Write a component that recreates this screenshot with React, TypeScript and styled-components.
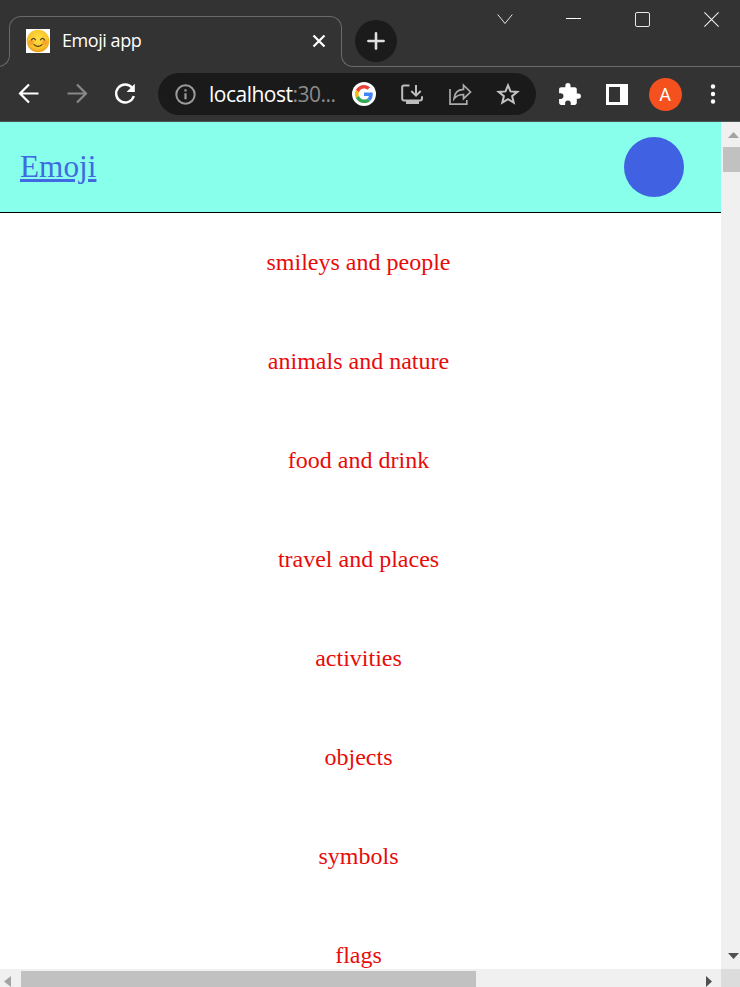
import React from "react";
import styled, { createGlobalStyle } from "styled-components";

const Global = createGlobalStyle`
  *, *::before, *::after { box-sizing: border-box; }
  html, body { margin: 0; padding: 0; overflow: hidden; }
`;

const Window = styled.div`
  width: 740px;
  height: 987px;
  display: flex;
  flex-direction: column;
  overflow: hidden;
  background: #fff;
  font-family: "Open Sans", "Noto Sans", sans-serif;
`;

const TabStrip = styled.div`
  position: relative;
  display: flex;
  height: 67px;
  flex: none;
  padding-left: 9px;
  background: #333;
  color: #fff;
  &::before {
    content: "";
    position: absolute;
    left: -6px;
    bottom: 0;
    width: 16px;
    height: 13px;
    border: solid #6a6a6a;
    border-width: 0 1px 1px 0;
    border-radius: 0 0 12px 0;
  }
  &::after {
    content: "";
    position: absolute;
    left: 341px;
    right: -5px;
    bottom: 0;
    height: 13px;
    border: solid #6a6a6a;
    border-width: 0 0 1px 1px;
    border-radius: 0 0 0 12px;
  }
`;

const Tab = styled.div`
  display: flex;
  align-items: center;
  width: 333px;
  height: 38px;
  margin-top: 16px;
  padding: 12px 15px 0 16px;
  border: solid #6a6a6a;
  border-width: 1px 1px 0 1px;
  border-radius: 12px 12px 0 0;
`;

const Favicon = styled.div`
  width: 24px;
  height: 24px;
  margin-top: -1px;
  background: #fff;
  svg { display: block; }
`;

const TabTitle = styled.span`
  margin: -3px 0 0 12px;
  font-size: 18px;
  line-height: 24px;
  letter-spacing: -0.44px;
  white-space: nowrap;
`;

const TabClose = styled.div`
  display: flex;
  margin: -2px 0 0 auto;
`;

const NewTab = styled.div`
  display: grid;
  place-items: center;
  width: 42px;
  height: 42px;
  margin: 20px 0 0 12.5px;
  border-radius: 50%;
  background: #1b1b1b;
`;

const WindowControls = styled.div`
  display: grid;
  grid-template-columns: 68px 69px 69px 69px;
  justify-items: center;
  align-items: center;
  height: 38px;
  margin-left: auto;
  margin-right: -6px;
`;

const Toolbar = styled.div`
  display: flex;
  align-items: center;
  height: 55px;
  flex: none;
  padding-left: 16px;
  background: #333;
  border-bottom: 1px solid #4a5755;
`;

const NavButtons = styled.div`
  display: grid;
  grid-template-columns: 48px 48px 46px;
  svg { display: block; }
`;

const AddressBar = styled.div`
  display: flex;
  align-items: center;
  width: 378px;
  height: 42px;
  padding-left: 16px;
  border-radius: 21px;
  background: #1a1a1a;
`;

const Url = styled.span`
  width: 131px;
  flex: none;
  margin-left: 12px;
  font-size: 21px;
  line-height: 28px;
  letter-spacing: -0.5px;
  color: #fff;
  white-space: nowrap;
`;

const Port = styled.span`
  color: #8b8b8b;
`;

const AddressActions = styled.div`
  display: grid;
  flex: none;
  grid-template-columns: repeat(4, 48px);
  justify-items: center;
  align-items: center;
`;

const Extensions = styled.div`
  display: grid;
  grid-template-columns: 48px 48px 48px 47px;
  justify-items: center;
  align-items: center;
  margin-left: 9px;
`;

const Avatar = styled.div`
  width: 33px;
  height: 33px;
  border-radius: 50%;
  background: #f4511e;
  color: #fff;
  font: 18px/34px Roboto, sans-serif;
  text-align: center;
`;

const Viewport = styled.div`
  display: grid;
  grid-template-columns: 721px 19px;
  grid-template-rows: 847px 18px;
  height: 865px;
`;

const Page = styled.main`
  overflow: hidden;
  font-family: "Liberation Serif", "Times New Roman", serif;
`;

const Header = styled.header`
  display: flex;
  align-items: center;
  justify-content: space-between;
  height: 91px;
  padding: 0 37px 0 20px;
  background: #87ffeb;
  border-bottom: 1px solid #000;
`;

const Brand = styled.a`
  font-size: 31.25px;
  line-height: 38px;
  color: #4169e1;
  text-decoration: underline;
  cursor: pointer;
`;

const Toggle = styled.div`
  width: 60px;
  height: 60px;
  border-radius: 50%;
  background: #4161e3;
`;

const Categories = styled.ul`
  margin: 0;
  padding: 0 4px 0 0;
  list-style: none;
`;

const Category = styled.li`
  height: 99px;
  font-size: 24px;
  line-height: 99px;
  text-align: center;
  color: #e80b0b;
`;

const VerticalBar = styled.div`
  display: flex;
  flex-direction: column;
  align-items: center;
  padding: 10px 0 10px 2px;
  background: #f0f0f0;
`;

const ArrowButton = styled.div`
  display: flex;
  padding-left: 4px;
`;

const HorizontalBar = styled.div`
  display: flex;
  align-items: flex-end;
  padding: 2px 9px 0 4px;
  background: #f0f0f0;
`;

const Thumb = styled.div<{ $vertical?: boolean }>`
  width: ${(p) => (p.$vertical ? "17px" : "455px")};
  height: ${(p) => (p.$vertical ? "25px" : "16px")};
  margin: ${(p) => (p.$vertical ? "9px 0 auto" : "0 auto 0 10px")};
  background: #c1c1c1;
`;

const Corner = styled.div`
  background: #dcdcdc;
`;

const Smiley = () => (
  <svg width="24" height="24" viewBox="0 0 24 24" fill="none">
    <defs>
      <radialGradient id="face" cx=".5" cy=".4" r=".6">
        <stop offset="0" stopColor="#ffdf46" />
        <stop offset=".7" stopColor="#f9c52c" />
        <stop offset="1" stopColor="#e99a1e" />
      </radialGradient>
    </defs>
    <circle cx="12" cy="12" r="11.3" fill="url(#face)" />
    <circle cx="5.2" cy="13.5" r="2.7" fill="#f48d2d" opacity=".6" />
    <circle cx="18.8" cy="13.5" r="2.7" fill="#f48d2d" opacity=".6" />
    <path d="M5.5 10.8q2-2.8 4 0M14.5 10.8q2-2.8 4 0M8 15.6q4 3.4 8 0" stroke="#543b1c" strokeWidth="1.2" strokeLinecap="round" />
  </svg>
);

const GoogleIcon = () => (
  <svg width="24" height="24" viewBox="0 0 24 24" fill="none">
    <circle cx="12" cy="12" r="12" fill="#fff" />
    <g transform="translate(12 12) scale(.38) translate(-24 -24)">
      <path fill="#EA4335" d="M24 9.5c3.54 0 6.71 1.22 9.21 3.6l6.85-6.85C35.9 2.38 30.47 0 24 0 14.62 0 6.51 5.38 2.56 13.22l7.98 6.19C12.43 13.72 17.74 9.5 24 9.5z" />
      <path fill="#4285F4" d="M46.98 24.55c0-1.57-.15-3.09-.38-4.55H24v9.02h12.94c-.58 2.96-2.26 5.48-4.78 7.18l7.73 6c4.51-4.18 7.09-10.36 7.09-17.65z" />
      <path fill="#FBBC05" d="M10.53 28.59c-.48-1.45-.76-2.99-.76-4.59s.27-3.14.76-4.59l-7.98-6.19C.92 16.46 0 20.12 0 24c0 3.88.92 7.54 2.56 10.78l7.97-6.19z" />
      <path fill="#34A853" d="M24 48c6.48 0 11.93-2.13 15.89-5.81l-7.73-6c-2.15 1.45-4.92 2.3-8.16 2.3-6.26 0-11.57-4.22-13.47-9.91l-7.98 6.19C6.51 42.62 14.62 48 24 48z" />
    </g>
  </svg>
);

const categories = [
  "smileys and people",
  "animals and nature",
  "food and drink",
  "travel and places",
  "activities",
  "objects",
  "symbols",
  "flags",
];

export default function App() {
  return (
    <Window>
      <Global />
      <TabStrip>
        <Tab>
          <Favicon><Smiley /></Favicon>
          <TabTitle>Emoji app</TabTitle>
          <TabClose>
            <svg width="14" height="14" viewBox="0 0 14 14" stroke="#fff" strokeWidth="2.2">
              <path d="M1.5 1.5l11 11M12.5 1.5l-11 11" />
            </svg>
          </TabClose>
        </Tab>
        <NewTab>
          <svg width="18" height="18" viewBox="0 0 18 18" stroke="#e0e0e0" strokeWidth="2.6" strokeLinecap="round">
            <path d="M9 1.4v15.2M1.4 9h15.2" />
          </svg>
        </NewTab>
        <WindowControls>
          <svg width="16" height="12" viewBox="0 0 16 12" fill="none" stroke="#e2e2e2"><path d="M.7 1.5L8 10.5l7.3-9" /></svg>
          <svg width="15" height="16" viewBox="0 0 15 16" stroke="#fff"><path d="M0 7.5h15" /></svg>
          <svg width="15" height="15" viewBox="0 0 15 15" fill="none" stroke="#e8e8e8"><rect x=".5" y=".5" width="14" height="14" rx="1.5" /></svg>
          <svg width="15" height="15" viewBox="0 0 15 15" stroke="#ececec" strokeWidth="1.1"><path d="M.4.4l14.2 14.2M14.6.4L.4 14.6" /></svg>
        </WindowControls>
      </TabStrip>

      <Toolbar>
        <NavButtons>
          <svg width="26" height="26" viewBox="0 0 26 26" fill="none" stroke="#fff" strokeWidth="2.2"><path d="M22.5 12.5H4.5M13 3.5l-9 9 9 9" /></svg>
          <svg width="26" height="26" viewBox="0 0 26 26" fill="none" stroke="#888" strokeWidth="2.2"><path d="M3.5 12.5h18M13 3.5l9 9-9 9" /></svg>
          <svg width="26" height="26" viewBox="0 0 26 26" fill="none" stroke="#fff" strokeWidth="2.4">
            <path d="M20.2 6.8A9 9 0 1 0 21.8 15" />
            <path d="M22.8 2.8v8.2h-8.2z" fill="#fff" stroke="none" />
          </svg>
        </NavButtons>
        <AddressBar>
          <svg width="23" height="23" viewBox="0 0 23 23" fill="none" stroke="#9b9b9b" strokeWidth="2">
            <circle cx="11.5" cy="11.5" r="9.2" /><path d="M11.5 10.2v6M11.5 6.3v2.3" strokeWidth="2.2" />
          </svg>
          <Url>localhost<Port>:30...</Port></Url>
          <AddressActions>
            <GoogleIcon />
            <svg width="24" height="24" viewBox="0 0 24 24" fill="none" stroke="#bdbdbd" strokeWidth="2">
              <path d="M9.5 3.5H4a1.8 1.8 0 0 0-1.8 1.8v11.4A1.8 1.8 0 0 0 4 18.5h16a2 2 0 0 0 2-2v-2.3M16 3v10M11.3 9l4.7 4.7L20.7 9" />
              <path d="M6 18h13v4H6z" fill="#bdbdbd" stroke="none" />
            </svg>
            <svg width="24" height="24" viewBox="0 0 24 24" fill="none" stroke="#ababab" strokeWidth="1.7">
              <path d="M2 7v15.2h16.8V18M6 16.8C6.5 11 9.4 7.7 15.5 7.4V3.2l7 6.8-7 6.7v-4.2c-4.4 0-7.1 1.2-9.5 4.3z" />
            </svg>
            <svg width="24" height="24" viewBox="0 0 24 24" fill="none" stroke="#c2c2c2" strokeWidth="2">
              <path d="M12 3.3l2.5 6.1 6.8.5-5.2 4.2 1.6 6.6-5.7-3.6-5.7 3.6 1.6-6.6-5.2-4.2 6.8-.5z" />
            </svg>
          </AddressActions>
        </AddressBar>
        <Extensions>
          <svg width="25" height="25" viewBox="0 0 24 24" fill="#fff">
            <path d="M20.5 11H19V7c0-1.1-.9-2-2-2h-4V3.5a2.5 2.5 0 0 0-5 0V5H4c-1.1 0-2 .9-2 2v3.8h1.5a2.7 2.7 0 0 1 0 5.4H2V20c0 1.1.9 2 2 2h3.8v-1.5a2.7 2.7 0 0 1 5.4 0V22H17c1.1 0 2-.9 2-2v-4h1.5a2.5 2.5 0 0 0 0-5z" />
          </svg>
          <svg width="22" height="21" viewBox="0 0 22 21">
            <path fill="#fff" fillRule="evenodd" d="M0 0h22v21H0zM3 3v15h11V3z" />
          </svg>
          <Avatar>A</Avatar>
          <svg width="6" height="20" viewBox="0 0 6 20" fill="#fff"><circle cx="3" cy="2.5" r="2.2" /><circle cx="3" cy="10" r="2.2" /><circle cx="3" cy="17.5" r="2.2" /></svg>
        </Extensions>
      </Toolbar>

      <Viewport>
        <Page>
          <Header>
            <Brand>Emoji</Brand>
            <Toggle />
          </Header>
          <Categories>
            {categories.map((name) => <Category key={name}>{name}</Category>)}
          </Categories>
        </Page>
        <VerticalBar>
          <ArrowButton><svg width="11" height="6" viewBox="0 0 11 6" fill="#a3a3a3"><path d="M0 6L5.5 0 11 6z" /></svg></ArrowButton>
          <Thumb $vertical />
          <ArrowButton><svg width="11" height="6" viewBox="0 0 11 6" fill="#505050"><path d="M0 0h11L5.5 6z" /></svg></ArrowButton>
        </VerticalBar>
        <HorizontalBar>
          <svg width="7" height="11" viewBox="0 0 7 11" fill="#a3a3a3"><path d="M7 0v11L0 5.5z" /></svg>
          <Thumb />
          <svg width="6" height="11" viewBox="0 0 6 11" fill="#505050"><path d="M0 0v11l6-5.5z" /></svg>
        </HorizontalBar>
        <Corner />
      </Viewport>
    </Window>
  );
}
